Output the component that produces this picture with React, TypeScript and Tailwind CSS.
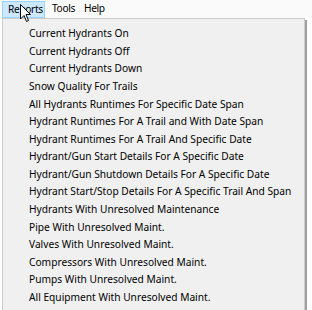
import React from "react";

const items = [
  "Current Hydrants On",
  "Current Hydrants Off",
  "Current Hydrants Down",
  "Snow Quality For Trails",
  "All Hydrants Runtimes For Specific Date Span",
  "Hydrant Runtimes For A Trail and With Date Span",
  "Hydrant Runtimes For A Trail And Specific Date",
  "Hydrant/Gun Start Details For A Specific Date",
  "Hydrant/Gun Shutdown Details For A Specific Date",
  "Hydrant Start/Stop Details For A Specific Trail And Span",
  "Hydrants With Unresolved Maintenance",
  "Pipe With Unresolved Maint.",
  "Valves With Unresolved Maint.",
  "Compressors With Unresolved Maint.",
  "Pumps With Unresolved Maint.",
  "All Equipment With Unresolved Maint.",
];

export default function App() {
  return (
    <div
      className="w-[312px] h-[310px] overflow-hidden bg-white relative text-[#000]"
      style={{ fontFamily: '"Noto Sans", "Open Sans", sans-serif' }}
    >
      <div className="h-[18px] flex items-stretch bg-[#fafafa] text-[10.2px] tracking-[-0.35px]">
        <div className="ml-[2px] mt-[1px] w-[43px] pl-[5px] flex items-center bg-[#cce8ff] border border-[#99d1ff]">
          Reports
        </div>
        <div className="w-[32px] pl-[7px] flex items-center">Tools</div>
        <div className="pl-[7px] flex items-center">Help</div>
      </div>
      <div className="flex">
        <div className="ml-[2px] w-[303px] h-[300px] bg-[#f0f0f0] border border-[#cccccc] border-b-0 pt-[6px] text-[10.2px]">
          {items.map((t) => (
            <div key={t} className="h-[17.6px] flex items-center pl-[26px] whitespace-nowrap">
              {t}
            </div>
          ))}
        </div>
        <div className="w-[2px] mt-[2px] bg-[#a0a0a0]" />
      </div>
      <svg className="absolute left-[20px] top-[4px]" width="12" height="19" viewBox="0 0 12 19">
        <path d="M0.5 0.5 L0.5 15 L4 11.5 L6.5 17.5 L8.5 16.5 L6 10.5 L10.5 10.5 Z" fill="#fff" stroke="#000" strokeWidth="1" />
      </svg>
    </div>
  );
}
